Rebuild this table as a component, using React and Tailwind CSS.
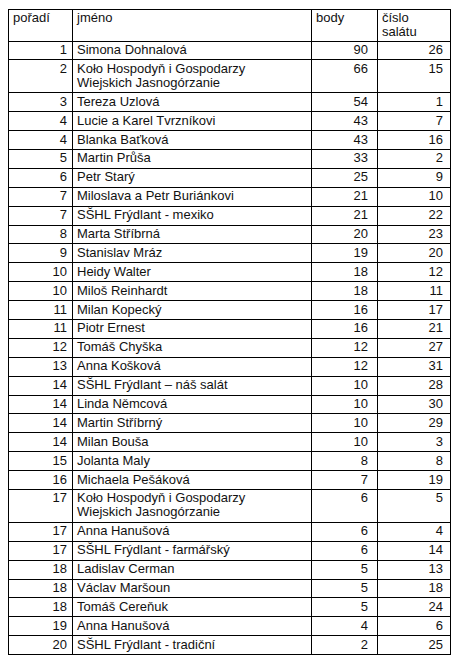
const rows = [
  [1, "Simona Dohnalová", 90, 26],
  [2, "Koło Hospodyň i Gospodarzy Wiejskich Jasnogórzanie", 66, 15],
  [3, "Tereza Uzlová", 54, 1],
  [4, "Lucie a Karel Tvrzníkovi", 43, 7],
  [4, "Blanka Baťková", 43, 16],
  [5, "Martin Průša", 33, 2],
  [6, "Petr Starý", 25, 9],
  [7, "Miloslava a Petr Buriánkovi", 21, 10],
  [7, "SŠHL Frýdlant - mexiko", 21, 22],
  [8, "Marta Stříbrná", 20, 23],
  [9, "Stanislav Mráz", 19, 20],
  [10, "Heidy Walter", 18, 12],
  [10, "Miloš Reinhardt", 18, 11],
  [11, "Milan Kopecký", 16, 17],
  [11, "Piotr Ernest", 16, 21],
  [12, "Tomáš Chyška", 12, 27],
  [13, "Anna Košková", 12, 31],
  [14, "SŠHL Frýdlant – náš salát", 10, 28],
  [14, "Linda Němcová", 10, 30],
  [14, "Martin Stříbrný", 10, 29],
  [14, "Milan Bouša", 10, 3],
  [15, "Jolanta Maly", 8, 8],
  [16, "Michaela Pešáková", 7, 19],
  [17, "Koło Hospodyň i Gospodarzy Wiejskich Jasnogórzanie", 6, 5],
  [17, "Anna Hanušová", 6, 4],
  [17, "SŠHL Frýdlant - farmářský", 6, 14],
  [18, "Ladislav Cerman", 5, 13],
  [18, "Václav Maršoun", 5, 18],
  [18, "Tomáš Cereňuk", 5, 24],
  [19, "Anna Hanušová", 4, 6],
  [20, "SŠHL Frýdlant - tradiční", 2, 25],
];

const cell = "border border-black align-top pt-[1.5px] pb-[2.4px]";

export default function App() {
  return (
    <div className="min-h-[662px] bg-white pl-[8px] pt-[9px] font-['Liberation_Sans',Arial,sans-serif] text-[13px] leading-[14px] text-[#111]">
      <table className="table-fixed border-collapse w-[442px]">
        <colgroup>
          <col className="w-[64px]" />
          <col className="w-[239px]" />
          <col className="w-[66px]" />
          <col className="w-[73px]" />
        </colgroup>
        <thead>
          <tr>
            <th className="border border-black align-top text-left font-normal pl-[4px] pt-[1px] pb-[1.5px]">pořadí</th>
            <th className="border border-black align-top text-left font-normal pl-[4px] pt-[1px] pb-[1.5px]">jméno</th>
            <th className="border border-black align-top text-left font-normal pl-[4px] pt-[1px] pb-[1.5px]">body</th>
            <th className="border border-black align-top text-left font-normal pl-[4px] pt-[1px] pb-[1.5px]">
              číslo
              <br />
              salátu
            </th>
          </tr>
        </thead>
        <tbody>
          {rows.map((r, i) => (
            <tr key={i}>
              <td className={`${cell} text-right pr-[5px]`}>{r[0]}</td>
              <td className={`${cell} pl-[4px] pr-[20px]`}>{r[1]}</td>
              <td className={`${cell} text-right pr-[9px]`}>{r[2]}</td>
              <td className={`${cell} text-right pr-[7px]`}>{r[3]}</td>
            </tr>
          ))}
        </tbody>
      </table>
    </div>
  );
}
